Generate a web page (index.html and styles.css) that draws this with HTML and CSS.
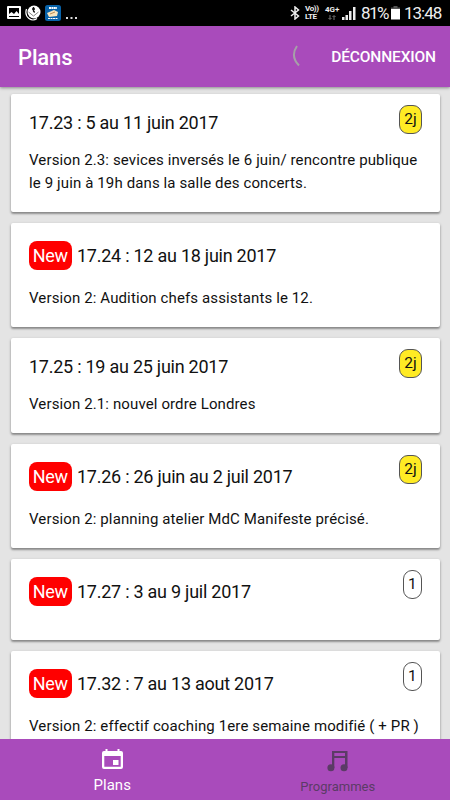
FILE: index.html
```html
<!DOCTYPE html>
<html lang="fr">
<head>
<meta charset="utf-8">
<title>Plans</title>
<link rel="stylesheet" href="styles.css">
</head>
<body>
<div class="status">
  <div class="status-left">
    <svg width="14" height="14" viewBox="0 0 14 14"><path fill="#fff" fill-rule="evenodd" d="M1 0h12q1 0 1 1v11q0 1-1 1H1q-1 0-1-1V1q0-1 1-1zM2 2v9h10V2zM2 10V8L4.500 6l2.500 2L9.500 5 12 8v2z"/></svg>
    <svg width="16" height="16" viewBox="0 0 16 16"><path d="M1.500 4Q-.5 10 4 13.500q4 3 8 0" fill="none" stroke="#fff" stroke-width="1.200"/><circle cx="9" cy="7" r="6.500" fill="#fff"/><path d="M3.500 7l5 4 5-4" fill="none" stroke="#777" stroke-width=".9"/><path d="M8.500 2v4q0 1 1.500 1M7 4h3" fill="none" stroke="#111" stroke-width="1.400"/></svg>
    <svg width="16" height="16" viewBox="0 0 16 16"><rect width="16" height="16" rx="2.500" fill="#0862a8"/><path d="M2 8l7-3 4 2-1 4-8 1z" fill="#f7e4bd"/><path d="M4 3h8" stroke="#fff" stroke-width="1.800" stroke-dasharray="2 .4"/><path d="M3 13.500h10" stroke="#fff" stroke-width="1" stroke-dasharray="2 .5"/><path d="M5 9l5-2" stroke="#b88a54"/></svg>
    <svg width="12" height="16" viewBox="0 0 12 16"><path d="M1 12h2v2H1zM5.500 12h2v2h-2zM10 12h2v2h-2z" fill="#ddd"/></svg>
  </div>
  <div class="status-right">
    <svg class="bt" width="10" height="14" viewBox="0 0 10 14"><path d="M1 4l7.500 6L5 13V1l3.500 3L1 10" fill="none" stroke="#eee" stroke-width="1.500"/></svg>
    <span class="lte">Vo))<br>LTE</span>
    <span class="net">4G+<svg width="8" height="5" viewBox="0 0 8 5"><path d="M2 0v4M.5 3L2 4.500 3.500 3M6 5V1M4.500 2L6 .5 7.500 2" fill="none" stroke="#777"/></svg></span>
    <svg class="signal" width="14" height="13" viewBox="0 0 14 13"><path d="M0 13v-3h2.500v3zM3.500 13V8H6v5zM7 13V4h2.500v9zM11 13V0h2.500v13z" fill="#eee"/></svg>
    <span class="pct">81%</span>
    <svg class="battery" width="9" height="14" viewBox="0 0 9 14"><path d="M0 3V1.500h2.500V0h4v1.500H9V3z" fill="#555"/><path d="M0 3h9v10.500H0z" fill="#fff"/></svg>
    <span class="clock">13:48</span>
  </div>
</div>
<header class="bar">
  <h1>Plans</h1>
  <svg class="spinner" width="9" height="22" viewBox="0 0 9 22"><path d="M5 1Q-2 11 7 20.500" fill="none" stroke="#a6a0a8" stroke-width="2"/></svg>
  <span class="logout">DÉCONNEXION</span>
</header>
<main>
  <article class="card"><h2>17.23 : 5 au 11 juin 2017</h2><p>Version 2.3: sevices inversés le 6 juin/ rencontre publique<br>le 9 juin à 19h dans la salle des concerts.</p><span class="badge yellow">2j</span></article>
  <article class="card"><h2 class="fresh"><span class="new">New</span>17.24 : 12 au 18 juin 2017</h2><p>Version 2: Audition chefs assistants le 12.</p></article>
  <article class="card"><h2>17.25 : 19 au 25 juin 2017</h2><p>Version 2.1: nouvel ordre Londres</p><span class="badge yellow">2j</span></article>
  <article class="card"><h2 class="fresh"><span class="new">New</span>17.26 : 26 juin au 2 juil 2017</h2><p>Version 2: planning atelier MdC Manifeste précisé.</p><span class="badge yellow">2j</span></article>
  <article class="card"><h2 class="fresh"><span class="new">New</span>17.27 : 3 au 9 juil 2017</h2><p></p><span class="badge">1</span></article>
  <article class="card"><h2 class="fresh"><span class="new">New</span>17.32 : 7 au 13 aout 2017</h2><p>Version 2: effectif coaching 1ere semaine modifié ( + PR )</p><span class="badge">1</span></article>
</main>
<nav class="tabs">
  <a class="tab active"><svg width="21" height="21" viewBox="0 0 21 21"><path fill="#fff" fill-rule="evenodd" d="M3.500 0h2v2h10V0h2v2H19q2 0 2 2v14q0 2-2 2H2q-2 0-2-2V4q0-2 2-2h1.500zM2.300 7v10.800h16.400V7zM11 11h5.500v5H11z"/></svg><span>Plans</span></a>
  <a class="tab"><svg width="21" height="21" viewBox="0 0 21 21" fill="#5b3b66"><path fill-rule="evenodd" d="M5 0h15.500v17H18V7H7.300v10H5zM7.300 2v3H18V2z"/><circle cx="3.900" cy="16.800" r="3.500"/><circle cx="17" cy="16.800" r="3.500"/></svg><span>Programmes</span></a>
</nav>
</body>
</html>
```
FILE: styles.css
```css
* { box-sizing: border-box; }
body {
  margin: 0;
  width: 450px;
  height: 800px;
  overflow: hidden;
  display: flex;
  flex-direction: column;
  background: #e4e4e4;
  color: #111;
  font-family: Roboto, "Liberation Sans", sans-serif;
}
svg { display: block; flex: none; }
h1, h2, p { margin: 0; font-weight: 400; white-space: nowrap; }
.status {
  flex: none;
  height: 26px;
  padding: 0 9px 0 7px;
  display: flex;
  align-items: center;
  justify-content: space-between;
  background: #000;
  color: #eee;
}
.status-left, .status-right { display: flex; align-items: center; }
.status-left { gap: 4px; }
.bt { margin-right: 5px; }
.lte { width: 14px; font-size: 8px; line-height: 8px; font-weight: 700; letter-spacing: -.4px; margin-right: 6px; white-space: nowrap; }
.net { width: 15px; font-size: 8px; line-height: 8px; font-weight: 700; margin-right: 2px; }
.net svg { margin: 1px 0 0 3px; }
.signal { margin-right: 5px; }
.pct { width: 27px; font-size: 17px; letter-spacing: -1.500px; margin-right: 3px; }
.battery { margin-right: 4px; }
.clock { width: 37px; font-size: 17px; letter-spacing: -1px; white-space: nowrap; }
.bar {
  flex: none;
  height: 61px;
  padding: 0 14px 0 18px;
  display: flex;
  align-items: center;
  background: #a94bbb;
  color: #fff;
  box-shadow: 0 1px 3px rgba(0, 0, 0, .4);
}
h1 { font-size: 22px; font-weight: 500; letter-spacing: -.15px; margin: 1px auto 0 0; }
.spinner { margin: -2px 30px 0 0; }
.logout { font-size: 15.500px; font-weight: 500; letter-spacing: -.13px; }
main {
  flex: 1;
  min-height: 0;
  overflow: hidden;
  padding: 7px 10.500px 0 11px;
  display: flex;
  flex-direction: column;
  gap: 11px;
}
.card {
  position: relative;
  flex: none;
  padding: 17px 18px 17.500px;
  background: #fff;
  border-radius: 2px;
  box-shadow: 0 2px 2px rgba(0, 0, 0, .28), 0 1px 3px rgba(0, 0, 0, .24);
}
h2 { display: flex; align-items: center; height: 22px; margin-bottom: 15.500px; font-size: 18px; letter-spacing: -.25px; }
h2.fresh { height: 31px; }
p { font-size: 15px; line-height: 23px; letter-spacing: .12px; }
.new {
  width: 43.500px;
  height: 29.500px;
  margin: 0 5px 0 -.5px;
  border-radius: 8px;
  background: #f00;
  color: #fff;
  line-height: 30px;
  text-align: center;
}
.badge {
  position: absolute;
  top: 11px;
  right: 17.500px;
  min-width: 19.500px;
  height: 28.500px;
  padding: 0 4px;
  border: 1px solid #555;
  border-radius: 9px;
  font-size: 15.500px;
  line-height: 26px;
  text-align: center;
}
.yellow { min-width: 23px; background: #ffeb24; }
.tabs { flex: none; height: 61px; display: flex; background: #a94bbb; }
.tab {
  flex: 1;
  display: flex;
  flex-direction: column;
  align-items: center;
  padding: 12px 0 0 1px;
  color: #5b3b66;
  font-size: 13px;
  line-height: 18px;
}
.tab span { margin-top: 6px; }
.active { color: #fff; padding: 10px 0 0; font-size: 15px; }
```
